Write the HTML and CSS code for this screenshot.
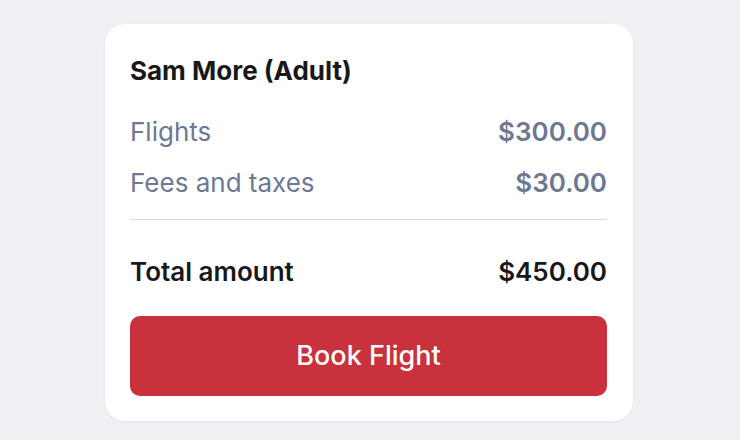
FILE: index.html
```html
<!DOCTYPE html>
<html lang="en">
<head>
	<meta charset="UTF-8">
	<title>Booking summary</title>
	<link rel="stylesheet" href="styles.css">
</head>
<body>
	<div class="summary">
		<h2 class="passenger">Sam More (Adult)</h2>
		<div class="row">
			<span>Flights</span>
			<span class="price">$300.00</span>
		</div>
		<div class="row">
			<span>Fees and taxes</span>
			<span class="price">$30.00</span>
		</div>
		<div class="total">
			<span>Total amount</span>
			<span>$450.00</span>
		</div>
		<a class="book" href="javascript:void(0)">Book Flight</a>
	</div>
</body>
</html>
```

FILE: styles.css
```css
*{padding: 0;margin: 0;box-sizing: border-box;}
body{background: #eff0f4;font-family: Inter, "Noto Sans", sans-serif;height: 440px;display: flex;justify-content: center;padding-top: 24px;padding-right: 2px;}
.summary{width: 528px;height: 397px;background: #fff;border-radius: 20px;padding: 24px 26px 25px 25px;display: flex;flex-direction: column;box-shadow: 0 1px 3px rgba(20,30,60,0.06);}
.passenger{font-size: 26px;font-weight: 700;color: #18181b;line-height: 46px;margin-bottom: 12px;}
.row{display: flex;justify-content: space-between;font-size: 26px;color: #6f7891;line-height: 51px;}
.row .price{font-weight: 600;}
.total{display: flex;justify-content: space-between;font-size: 26px;font-weight: 600;color: #18181b;border-top: 1px solid #d9d9de;margin-top: 11px;padding-top: 29px;line-height: 46px;}
.book{display: block;margin-top: auto;height: 80px;line-height: 80px;background: #c9323c;color: #fff;text-align: center;text-decoration: none;border-radius: 10px;font-size: 27px;font-weight: 500;}
```
